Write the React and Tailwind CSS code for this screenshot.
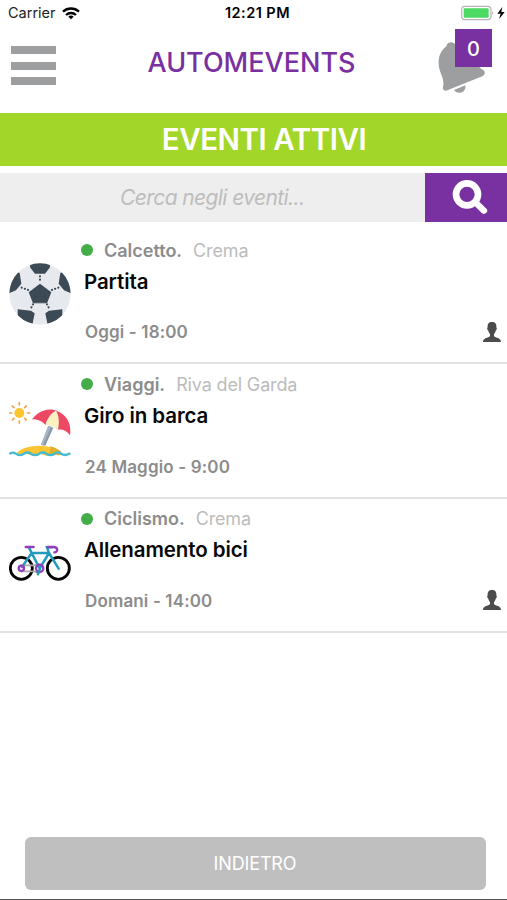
const events = [
  { category: "Calcetto.", place: "Crema", title: "Partita", date: "Oggi - 18:00", icon: BallIcon, mine: true },
  { category: "Viaggi.", place: "Riva del Garda", title: "Giro in barca", date: "24 Maggio - 9:00", icon: BeachIcon, mine: false },
  { category: "Ciclismo.", place: "Crema", title: "Allenamento bici", date: "Domani - 14:00", icon: BikeIcon, mine: true },
];

function WifiIcon() {
  return (
    <svg width="18" height="13" viewBox="0 0 54 39" fill="none" stroke="#000" strokeWidth="7">
      <path d="M3 14a35 35 0 0 1 48 0" />
      <path d="M12 24a22 22 0 0 1 30 0" />
      <path d="M27 37l-8-8a11 11 0 0 1 16 0z" fill="#000" stroke="none" />
    </svg>
  );
}

function BatteryIcon() {
  return (
    <svg width="46" height="16" viewBox="0 0 138 48">
      <rect x="2" y="4" width="88" height="40" rx="10" fill="#fff" stroke="#b5b5b5" strokeWidth="3.5" />
      <rect x="8" y="10" width="75" height="28" rx="3" fill="#4cd964" />
      <path d="M94 18q5 6 0 12z" fill="#999" />
      <path d="M124 6l-15 20h10l-5 17 17-22h-10z" fill="#000" />
    </svg>
  );
}

function BellIcon() {
  return (
    <svg width="48" height="53" viewBox="555 120 144 159" fill="#9c9e9f">
      <path d="M580 139c1-15 23-17 27-4 35-6 54 12 60 38 5 20 13 31 25 38 5 5 4 13-2 17l-107 43c-8 3-15-2-13-10 4-17-2-29-8-45-11-31-4-61 18-77z" />
      <path d="M603 270l34-14c3 25-25 28-34 14z" />
    </svg>
  );
}

function SearchIcon() {
  return (
    <svg width="36" height="36" viewBox="0 0 108 108" fill="none" stroke="#fff">
      <circle cx="45" cy="43" r="33" strokeWidth="20" />
      <path d="M70 67l26 25" strokeWidth="19" strokeLinecap="round" />
    </svg>
  );
}

function BallIcon() {
  return (
    <svg width="62" height="62" viewBox="0 0 186 186">
      <clipPath id="ball">
        <circle cx="93" cy="93" r="92" />
      </clipPath>
      <g clipPath="url(#ball)" fill="#3b4a54">
        <circle cx="93" cy="93" r="93" fill="#e6e9ed" />
        <path d="M93 62l34 26-13 33H72L59 88z" />
        <path d="M62 0h62l-2 14-14 18H78L64 14z" />
        <path d="M0 91V20l32 10 5 32-16 20z" />
        <path d="M186 91V20l-32 10-5 32 16 20z" />
        <path d="M26 139l40 4 11 8-7 35H26z" />
        <path d="M160 139l-40 4-11 8 7 35h44z" />
        <g stroke="#3b4a54" strokeWidth="6.5" strokeLinecap="round" strokeDasharray="0.1 10">
          <path d="M93 40v20M38 74l20 7M148 74l-20 7M72 124l-9 17M114 124l9 17" />
        </g>
        <path d="M78 121h30" stroke="#b9bfc6" strokeWidth="3" />
      </g>
    </svg>
  );
}

function BeachIcon() {
  return (
    <svg width="62" height="62" viewBox="26 17 186 186">
      <circle cx="57" cy="65" r="15" fill="#fdc62f" />
      <path
        d="M57 34v7M57 89v7M27 65h7M81 65h7M36 44l5 5M73 81l5 5M36 86l5-5M73 49l5-5"
        stroke="#f7a04b"
        strokeWidth="5"
        strokeLinecap="round"
      />
      <path d="M46 187c28-32 112-32 141 0l-12 5-18-5-19 6-20-6-20 6-20-6-15 5z" fill="#fbc531" />
      <path d="M148 165c18 3 31 11 39 22l-12 5-18-5-19 6c12-8 16-17 10-28z" fill="#deb02c" />
      <path d="M144 103l15 6-24 54-13-2z" fill="#8b9baa" />
      <path d="M144 103l8 3-24 56-6-1z" fill="#a7b5c2" />
      <path d="M95 84c19-26 52-37 77-24 28 12 42 37 37 72-9-13-22-19-36-17-14-13-24-16-38-14-10-13-25-17-40-17z" fill="#ed4864" />
      <path d="M167 58c9 12 11 36 6 57-14-12-24-15-38-14 4-17 16-36 32-43z" fill="#fff2c0" />
      <path
        d="M27 188c8-6 13-6 19-1 9 7 16 6 25 0 8-6 13-5 21 0 9 6 16 6 25 0 8-6 13-5 21 0 9 6 16 6 25 0 8-6 12-5 19 0 10 6 17 6 28-1"
        fill="none"
        stroke="#43bbd4"
        strokeWidth="7"
      />
    </svg>
  );
}

function BikeIcon() {
  return (
    <svg width="62" height="62" viewBox="26 -10 186 186" fill="none" strokeWidth="7">
      <circle cx="63" cy="99" r="33" stroke="#050505" strokeWidth="8.5" />
      <circle cx="174" cy="99" r="33" stroke="#050505" strokeWidth="8.5" />
      <path d="M63 90h37l16-4M63 108h37l16 5" stroke="#aaa9a5" strokeWidth="5" />
      <path
        d="M65 95l29-42-8-16M94 53h52M94 53l24 46 28-46-6-17h15M146 53l29 47M113 108v9"
        stroke="#249abd"
        strokeWidth="7.5"
        strokeLinecap="round"
      />
      <path d="M76 35h24M142 35h17c16 0 14 16 3 16" stroke="#943cbd" strokeLinecap="round" />
      <circle cx="63" cy="99" r="8" stroke="#943cbd" />
      <circle cx="118" cy="99" r="11" stroke="#943cbd" />
      <path d="M120 98l-7 17" stroke="#249abd" />
    </svg>
  );
}

function PersonIcon() {
  return (
    <svg width="18" height="20" viewBox="0 0 54 60" fill="#4c4c4c">
      <path d="M27 0C17 0 13 6 14 16c-3 2-1 8 2 10 1 5 3 8 5 10v6C16 48 0 47 0 60h54c0-13-16-12-21-18v-6c2-2 4-5 5-10 3-2 5-8 2-10C41 6 37 0 27 0z" />
    </svg>
  );
}

function EventRow({ event }) {
  const Icon = event.icon;
  return (
    <div className="flex h-[134.4px] border-b-2 border-[#e2e2e2] pl-[9px]">
      <div className="flex w-[72px] shrink-0 pt-[33px]">
        <Icon />
      </div>
      <div className="flex-1 pt-[9px]">
        <div className="flex h-[22px] items-center text-[18px]">
          <span className="size-3 rounded-full bg-[#43ad48]" />
          <span className="ml-[11px] font-semibold text-[#8c8c8c]">{event.category}</span>
          <span className="ml-[11px] tracking-[-0.15px] text-[#bcbcbc]">{event.place}</span>
        </div>
        <div className="ml-[3px] mt-[7.5px] h-[26px] text-[20.5px] leading-[26px] font-semibold tracking-[-0.1px] text-[#080808]">
          {event.title}
        </div>
        <div className="mt-[28.5px] ml-1 flex h-5 items-center justify-between pr-[6px] text-[17px] font-semibold tracking-[0.15px] text-[#8c8c8c]">
          <span>{event.date}</span>
          {event.mine && (
            <span className="pb-[3px]">
              <PersonIcon />
            </span>
          )}
        </div>
      </div>
    </div>
  );
}

export default function App() {
  return (
    <div className="flex h-[900px] w-[507px] flex-col overflow-hidden border-b border-[#555] bg-white font-['Inter',sans-serif] whitespace-nowrap">
      <div className="grid h-[26px] shrink-0 grid-cols-[1fr_auto_1fr] items-center pl-2 text-[14.5px] text-[#222]">
        <div className="flex items-center gap-[6px]">
          <span>Carrier</span>
          <WifiIcon />
        </div>
        <span className="text-center font-semibold tracking-[0.45px] text-black">12:21 PM</span>
        <div className="flex justify-end">
          <BatteryIcon />
        </div>
      </div>

      <header className="flex h-[87px] shrink-0 items-start justify-between pl-[11px] pr-[15px]">
        <div className="flex w-[54px] flex-col gap-[7.5px] pt-[20px]">
          <span className="h-2 w-[45px] bg-[#9c9e9f]" />
          <span className="h-2 w-[45px] bg-[#9c9e9f]" />
          <span className="h-2 w-[45px] bg-[#9c9e9f]" />
        </div>
        <h1 className="pt-[21px] text-[27px] leading-8 font-medium text-[#7930a0]">AUTOMEVENTS</h1>
        <div className="relative h-[70px] w-[54px] pt-[14px]">
          <BellIcon />
          <span className="absolute top-[3px] right-0 flex h-[38px] w-[37px] items-center justify-center bg-[#7930a0] pt-px text-[20px] font-medium text-white">
            0
          </span>
        </div>
      </header>

      <h2 className="h-[52.5px] shrink-0 bg-[#a2d729] pl-[21px] text-center text-[29.5px] leading-[52px] font-semibold tracking-[-0.45px] text-white">
        EVENTI ATTIVI
      </h2>

      <div className="mt-[7.5px] flex h-[49px] shrink-0">
        <div className="flex flex-1 items-center justify-center bg-[#eee] text-[21px] tracking-[-0.6px] text-[#bdbdbd] italic">
          Cerca negli eventi...
        </div>
        <div className="flex w-[82.5px] items-center justify-center pl-[9px] bg-[#7930a0]">
          <SearchIcon />
        </div>
      </div>

      <div className="mt-[8px]">
        {events.map((event) => (
          <EventRow key={event.title} event={event} />
        ))}
      </div>

      <div className="mt-auto pr-[21.5px] pb-[9px] pl-[24.5px]">
        <button className="h-[53.5px] w-full rounded-md bg-[#bfbfbf] text-[18px] tracking-[-0.15px] text-white">INDIETRO</button>
      </div>
    </div>
  );
}
